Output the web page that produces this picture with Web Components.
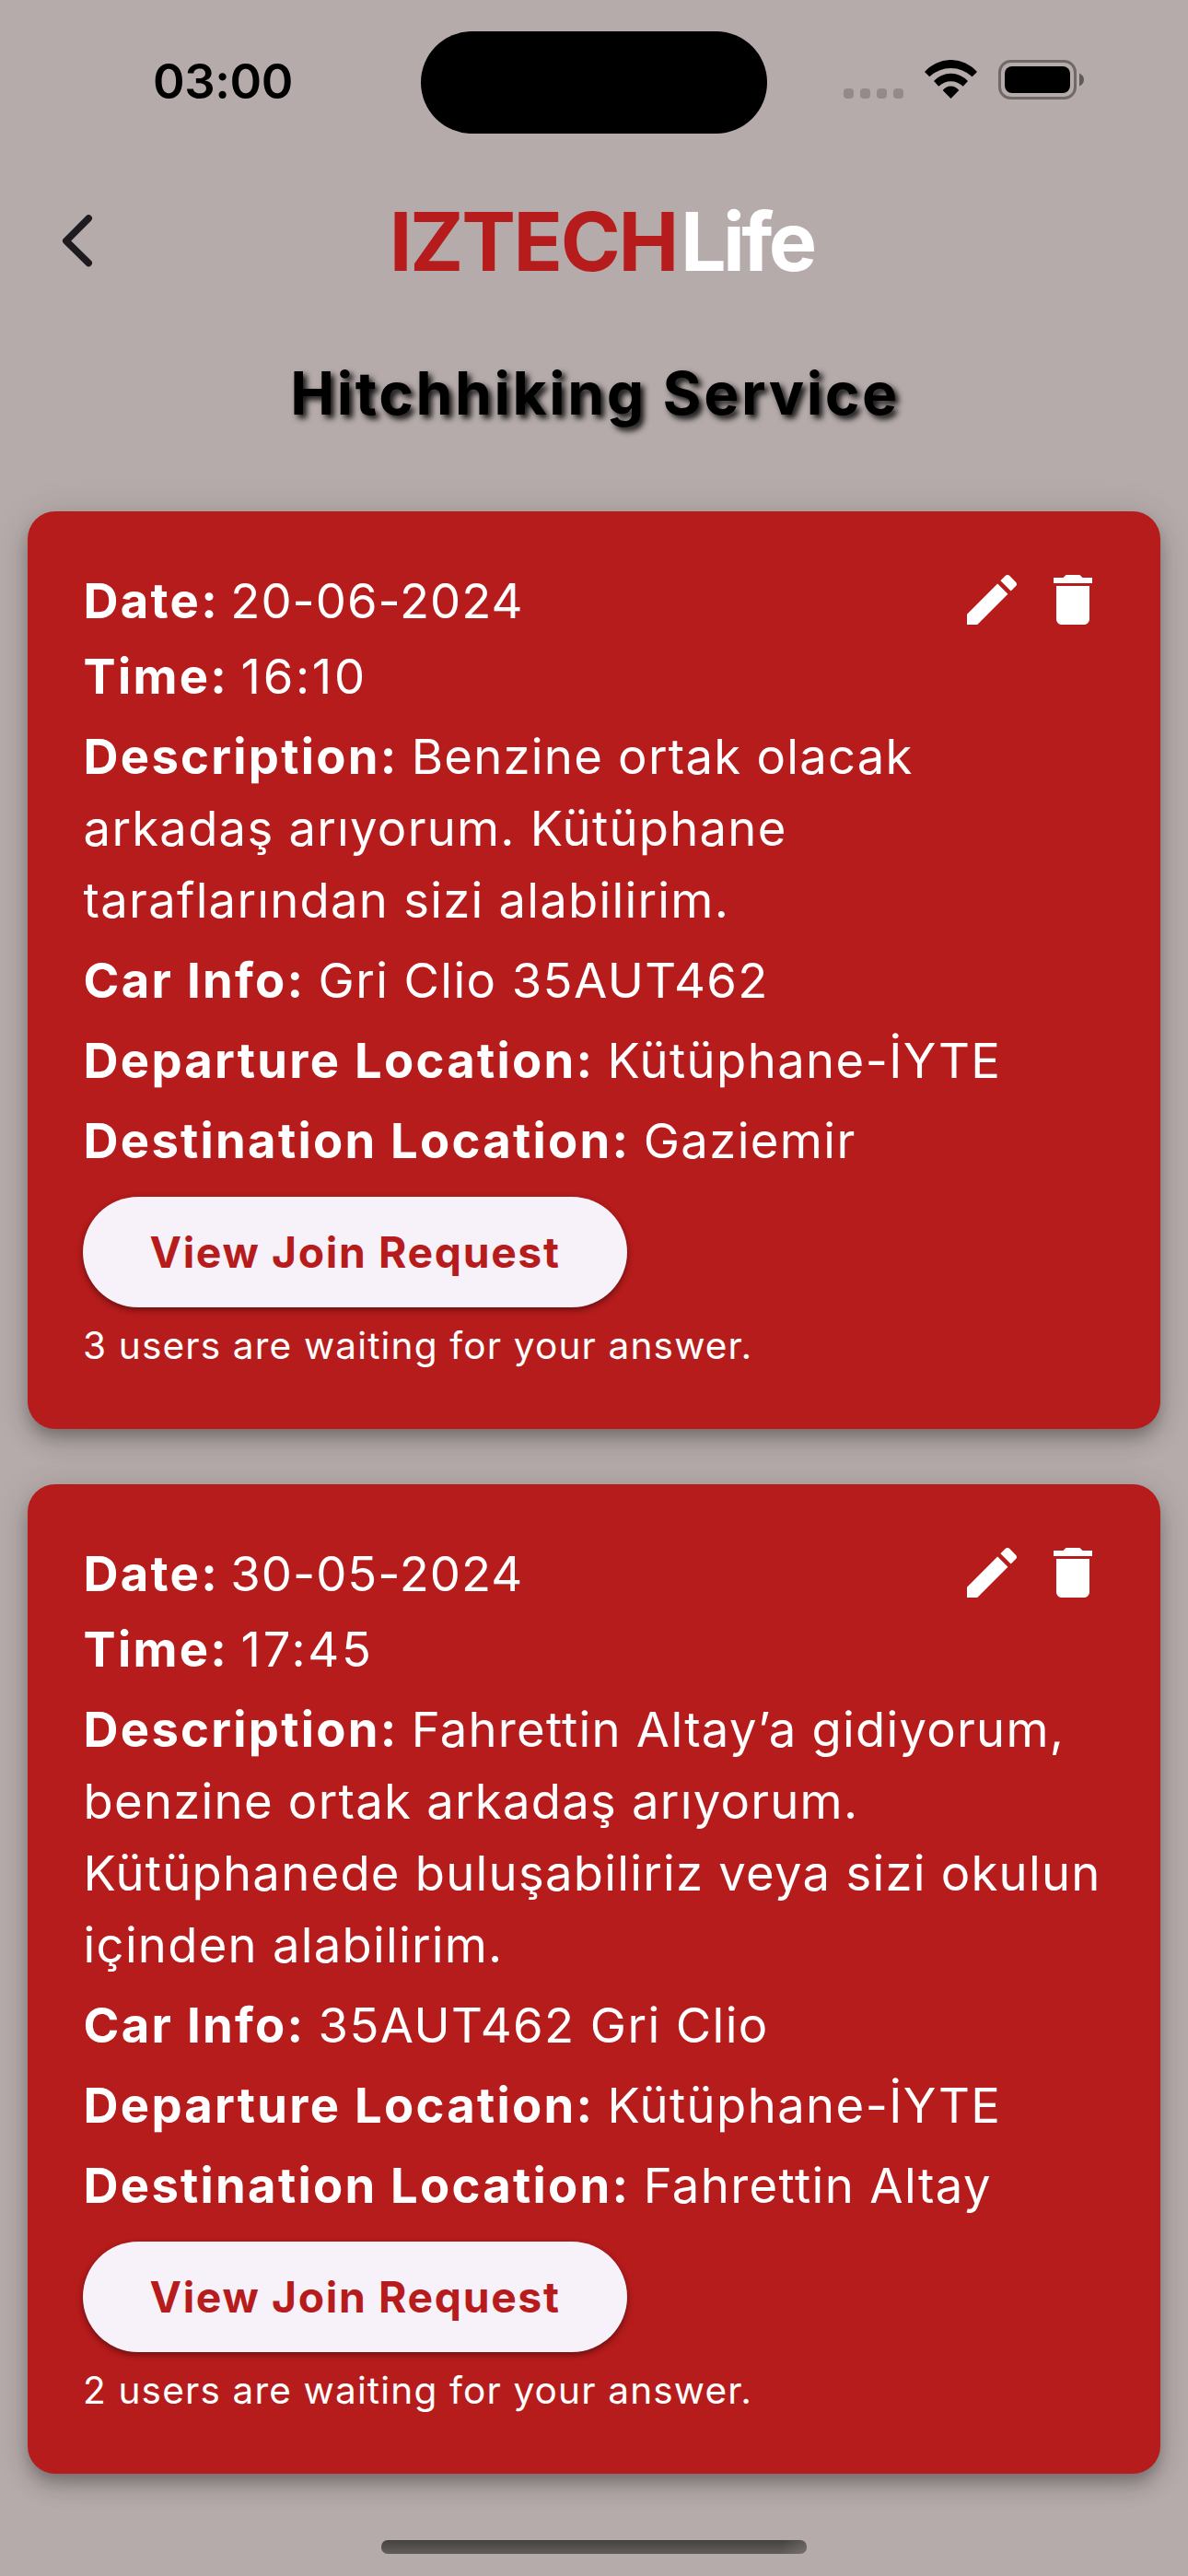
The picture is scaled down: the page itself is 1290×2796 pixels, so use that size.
<!DOCTYPE html>
<html lang="tr">
<head>
<meta charset="utf-8">
<title>IZTECHLife</title>
<style>
html,body{margin:0;padding:0}
body{width:1290px;height:2796px;background:#b5abaa;font-family:Inter,"Liberation Sans",sans-serif;overflow:hidden}
.date{margin-bottom:4px;--track:1px;--gap:-3.5px}
.time{--track:2.7px;--gap:-4px}
.desc{--track:1.25px}
</style>
</head>
<body>
<life-screen>
  <status-bar slot="status" time="03:00"></status-bar>
  <app-header slot="header"></app-header>
  <page-title slot="title">Hitchhiking Service</page-title>
  <ride-card waiting="3 users are waiting for your answer.">
    <ride-field label="Date:" class="date">20-06-2024</ride-field>
    <ride-field label="Time:" class="time">16:10</ride-field>
    <ride-field label="Description:" class="desc">Benzine ortak olacak<br>arkadaş arıyorum. Kütüphane<br>taraflarından sizi alabilirim.</ride-field>
    <ride-field label="Car Info:">Gri Clio 35AUT462</ride-field>
    <ride-field label="Departure Location:">Kütüphane-İYTE</ride-field>
    <ride-field label="Destination Location:">Gaziemir</ride-field>
  </ride-card>
  <ride-card waiting="2 users are waiting for your answer.">
    <ride-field label="Date:" class="date">30-05-2024</ride-field>
    <ride-field label="Time:" class="time">17:45</ride-field>
    <ride-field label="Description:" class="desc">Fahrettin Altay’a gidiyorum,<br>benzine ortak arkadaş arıyorum.<br>Kütüphanede buluşabiliriz veya sizi okulun<br>içinden alabilirim.</ride-field>
    <ride-field label="Car Info:">35AUT462 Gri Clio</ride-field>
    <ride-field label="Departure Location:">Kütüphane-İYTE</ride-field>
    <ride-field label="Destination Location:">Fahrettin Altay</ride-field>
  </ride-card>
</life-screen>
<script>
const define = (name, html, setup) => customElements.define(name, class extends HTMLElement {
  constructor() {
    super();
    this.attachShadow({ mode: 'open' }).innerHTML = html;
  }
  connectedCallback() { if (setup) setup(this, this.shadowRoot); }
});

define('status-bar', `
<style>
:host{display:flex;height:189px;align-items:flex-start;box-sizing:border-box}
.time{width:457px;padding:58px 0 0 166px;box-sizing:border-box;font-size:52.5px;line-height:60px;font-weight:600;letter-spacing:-.4px;color:#000;white-space:nowrap}
.island{width:376px;height:111px;margin-top:33.5px;border-radius:56px;background:#000}
.right{display:flex;align-items:flex-end;height:43px;margin:65px 0 0 83px}
.dots{display:flex;gap:7px;padding-bottom:1px}
.dots i{width:11px;height:11px;border-radius:4px;background:#938a89}
svg{display:block}
.wifi{margin:0 0 1px 23px}
.bat{margin-left:23px}
</style>
<div class="time"></div>
<div class="island"></div>
<div class="right">
  <div class="dots"><i></i><i></i><i></i><i></i></div>
  <svg class="wifi" width="57" height="42" viewBox="0 0 57 42"><path d="M0 13A37.7 37.7 0 0 1 57 13L51.7 18.3A33.6 33.6 0 0 0 5.3 18.3ZM10 23A24.8 24.8 0 0 1 47 23L41.7 28.7A18.8 18.8 0 0 0 15.3 28.7ZM19.7 33A11 11 0 0 1 37.3 33L28.5 42Z"/></svg>
  <svg class="bat" width="94" height="43" viewBox="0 0 94 43"><rect x="1.5" y="1.5" width="82" height="40" rx="12" fill="none" stroke="#6f6967" stroke-width="3"/><rect x="7" y="7" width="71" height="29" rx="8"/><path d="M88 14.5Q93 17 93 21.5T88 28.5Z" fill="#5f5a59"/></svg>
</div>`, (el, r) => { r.querySelector('.time').textContent = el.getAttribute('time'); });

define('app-header', `
<style>
:host{display:grid;grid-template-columns:120px 1fr 104px;height:144px;align-items:center}
svg{display:block;margin-left:60px}
.logo{justify-self:center;font-size:88px;line-height:110px;font-weight:660;letter-spacing:-3.7px;color:#fff;white-space:nowrap;padding-top:1px}
.logo b{font-weight:660;color:#b71c1c;letter-spacing:-2.3px;margin-right:4px}
</style>
<svg width="48" height="72" viewBox="0 0 48 72"><path d="M36.2 12L11.8 36.5L36.2 60.5" fill="none" stroke="#1d1b20" stroke-width="7.5" stroke-linecap="round" stroke-linejoin="round"/></svg>
<div class="logo"><b>IZTECH</b>Life</div>`);

define('page-title', `
<style>
:host{display:block;height:222px;padding:54px 0 0 2px;box-sizing:border-box;text-align:center;font-size:64px;line-height:80px;font-weight:700;letter-spacing:2.65px;color:#000;text-shadow:4px 4px 6px rgba(0,0,0,.9);white-space:nowrap}
</style><slot></slot>`);

define('ride-field', `
<style>
:host{display:block;font-size:52.6px;line-height:78px;letter-spacing:var(--track,1.4px);font-weight:400;color:#fff;white-space:nowrap;margin-bottom:9px;padding-left:.6px}
b{font-weight:700;letter-spacing:2.25px;margin-right:var(--gap,-2px)}
</style><b></b> <slot></slot>`, (el, r) => { r.querySelector('b').textContent = el.getAttribute('label'); });

define('edit-icon', `<style>:host,svg{display:block}</style>
<svg width="72" height="72" viewBox="0 0 24 24" fill="#fff"><path d="M3 17.25V21h3.75L17.81 9.94l-3.75-3.75L3 17.25zM20.71 7.04c.39-.39.39-1.02 0-1.41l-2.34-2.34c-.39-.39-1.02-.39-1.41 0l-1.83 1.83 3.75 3.75 1.83-1.83z"/></svg>`);

define('delete-icon', `<style>:host,svg{display:block}</style>
<svg width="72" height="72" viewBox="0 0 24 24" fill="#fff"><path d="M6 19c0 1.1.9 2 2 2h8c1.1 0 2-.9 2-2V7H6v12zM19 4h-3.5l-1-1h-5l-1 1H5v2h14V4z"/></svg>`);

define('pill-button', `
<style>
:host{display:flex;width:591px;height:120px;align-items:center;justify-content:center;border-radius:60px;background:#f7f2fa;color:#b71c1c;font-size:46.3px;line-height:60px;font-weight:680;letter-spacing:1.65px;white-space:nowrap;box-shadow:0 3px 6px rgba(0,0,0,.3),0 3px 9px rgba(0,0,0,.15)}
</style><span><slot></slot></span>`);

define('ride-card', `
<style>
:host{display:grid;grid-template-columns:1fr auto;box-sizing:border-box;padding:58px 59px 60px 60px;border-radius:30px;background:#b71c1c;box-shadow:0 9px 15px -3px rgba(0,0,0,.2),0 15px 24px rgba(0,0,0,.14),0 3px 42px rgba(0,0,0,.12)}
.main{display:flex;flex-direction:column;align-items:flex-start;width:900px}
pill-button{margin-top:13px}
.wait{margin-top:12px;font-size:40.6px;line-height:60px;letter-spacing:1.15px;color:#fff;white-space:nowrap}
.tools{display:flex;gap:16px;padding-top:2px;height:72px}
</style>
<div class="main"><slot></slot><pill-button>View Join Request</pill-button><div class="wait"></div></div>
<div class="tools"><edit-icon></edit-icon><delete-icon></delete-icon></div>`,
(el, r) => { r.querySelector('.wait').textContent = el.getAttribute('waiting'); });

define('home-indicator', `
<style>:host{display:block;width:462px;height:15px;border-radius:7px;background:linear-gradient(100deg,transparent 94%,rgba(181,171,170,.25)),linear-gradient(#444240,#635e5c)}</style>`);

define('life-screen', `
<style>
:host{display:flex;flex-direction:column;height:2796px;background:#b5abaa}
.list{display:flex;flex-direction:column;gap:60px;padding:0 30px}
home-indicator{margin:auto 0 24px;align-self:center}
</style>
<slot name="status"></slot><slot name="header"></slot><slot name="title"></slot>
<div class="list"><slot></slot></div>
<home-indicator></home-indicator>`);
</script>
</body>
</html>
